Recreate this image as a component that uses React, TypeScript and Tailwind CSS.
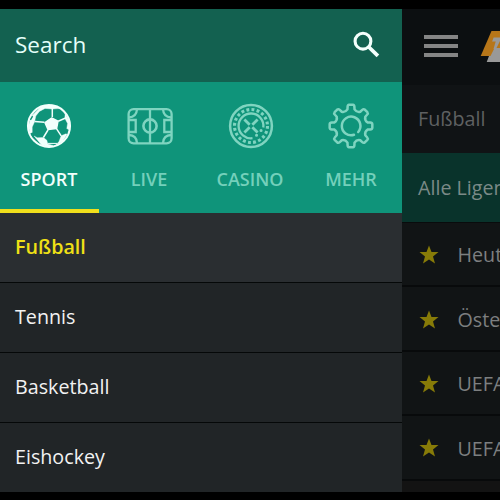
import React from "react";

function polar(r: number, deg: number) {
  const a = (deg * Math.PI) / 180;
  return `${(24 + r * Math.cos(a)).toFixed(2)} ${(24 + r * Math.sin(a)).toFixed(2)}`;
}

const gearPath =
  Array.from({ length: 8 }, (_, i) => {
    const c = i * 45;
    return `${i === 0 ? "M" : "L"}${polar(17, c - 12)} L${polar(19.6, c - 10)} Q${polar(21.4, c - 9)} ${polar(21.4, c - 5)} L${polar(21.4, c + 5)} Q${polar(21.4, c + 9)} ${polar(19.6, c + 10)} L${polar(17, c + 12)} Q${polar(14.6, c + 22.5)} ${polar(17, c + 33)}`;
  }).join(" ") + "Z";

function Ball() {
  return (
    <svg viewBox="0 0 48 48" className="-ml-0.5 size-12" fill="none" stroke="#f2fffc" strokeWidth="1.5">
      <circle cx="24" cy="24" r="21" strokeWidth="2.1" />
      <path d="M26.6 16 33 19.2 31.6 26.4 23 27.4 20 20.6Z" fill="#f2fffc" strokeLinejoin="round" />
      <path d="M27.3 15V6.8M33.2 19.2l6.8-2.9M31.6 26.8l4.6 7M23 28l-4.6 7.5M19.4 20.3l-9.8-.7" />
      <path d="M16 4.6 27 2.8 37 7 33.5 6.6 27.3 7 20 6.4 14.4 9.4 10.8 14 9.6 19.8 7.2 25 7.2 30.5 4.8 31.5 3.6 24 5.8 15ZM39.8 16.3 40.2 11.8 44.6 20 44.6 28 41.8 26.6 42.6 21.5ZM9 34 12.4 35.8 18.4 35.5 21.8 38.2 22.8 42 28 43.4 24 44.6 17 43.4ZM36.2 33.8 41 31.8 42 32.4 37.5 39.5 30.5 43.4 34 39.5Z" fill="#f2fffc" strokeWidth=".4" />
      <path d="M22.6 41.4h9.4" strokeWidth="1" />
      <path d="M5.4 17.8 7.6 14.2M6.2 31.4q1.5 3.4 3.4 5" stroke="#0f947a" strokeWidth="1.4" />
    </svg>
  );
}

function Pitch() {
  return (
    <svg viewBox="0 0 48 48" className="size-12" fill="none" stroke="#7fd4c0" strokeWidth="2.3">
      <rect x="2.6" y="7.1" width="43" height="34.2" rx="5" />
      <circle cx="24" cy="24" r="6.6" strokeWidth="2.6" />
      <path d="M24 7v34.4M3 18h6.7v12H3M45 18h-6.7v12H45M3 15.3Q10.5 15 11 7.2M45 15.3Q37.5 15 37 7.2M3 33q7.5.3 8 8M45 33q-7.5.3-8 8" />
    </svg>
  );
}

function Chip() {
  return (
    <svg viewBox="0 0 48 48" className="size-12" fill="none" stroke="#7fd4c0" strokeWidth="2.5">
      <circle cx="24" cy="24" r="20.9" />
      <circle cx="24" cy="24" r="16.5" strokeWidth="3.1" strokeDasharray="2.9 2.284" />
      <path d="M25.5 36.2A12.4 12.4 0 1 1 36.3 25.5" strokeWidth="2.3" />
      <path d="m17.4 17.4 5.3 5.3m2.6 2.6 5.3 5.3m0-13.2-5.3 5.3m-2.6 2.6-5.3 5.3" strokeWidth="2.8" />
      <path d="M34 28.6h.1M29.5 33.2h.1" strokeWidth="3" strokeLinecap="round" />
    </svg>
  );
}

function Gear() {
  return (
    <svg viewBox="0 0 48 48" className="-ml-0.5 size-12" fill="none" stroke="#7fd4c0" strokeWidth="2.5">
      <path d={gearPath} strokeLinejoin="round" />
      <path d="M31.2 30A9.3 9.3 0 1 0 27 32.8" strokeLinecap="round" />
    </svg>
  );
}

const tabs = [
  { label: "SPORT", icon: Ball },
  { label: "LIVE", icon: Pitch },
  { label: "CASINO", icon: Chip },
  { label: "MEHR", icon: Gear },
];

const sports = ["Fußball", "Tennis", "Basketball", "Eishockey"];
const leagues = ["Heute", "Österreich", "UEFA Champions", "UEFA Europa"];

export default function App() {
  return (
    <div className="flex h-[500px] w-[500px] flex-col overflow-hidden bg-black pt-[9px] font-['Open_Sans','Noto_Sans',sans-serif]">
      <div className="flex h-[483px] shrink-0 overflow-hidden">
        <aside className="flex w-[402px] shrink-0 flex-col bg-[#212527]">
          <div className="flex h-[73px] shrink-0 items-center justify-between bg-[#136150] pr-[22px] pl-[15px]">
            <span className="mt-[-2px] text-[22.5px] leading-8 text-[#e4fff9]">Search</span>
            <svg viewBox="0 0 26 26" className="mt-[-3px] size-[27px]" fill="none" stroke="#f4fffc">
              <circle cx="9.6" cy="9.8" r="7.6" strokeWidth="3" />
              <path d="m15.2 15.4 8.8 8.6" strokeWidth="3.6" />
            </svg>
          </div>
          <nav className="flex h-[131px] shrink-0 bg-[#0f947a]">
            {tabs.map(({ label, icon: Icon }, i) => (
              <div
                key={label}
                className={`flex flex-col items-center border-b-4 pt-5 ${
                  i === 0
                    ? "w-[99px] border-[#f0df1c] text-[#f2fffc]"
                    : "w-[101px] border-transparent text-[#74d0bb]"
                }`}
              >
                <Icon />
                <span className="mt-[17px] -ml-px text-[18px] leading-6 font-semibold">{label}</span>
              </div>
            ))}
          </nav>
          {sports.map((name, i) => (
            <div
              key={name}
              className={`flex h-[70px] shrink-0 items-center border-b border-[#050808] pb-0.5 pl-[15px] text-[19.7px] ${
                i === 0 ? "bg-[#2a2e31] font-semibold text-[#f0e016]" : "text-[#f2f2f2]"
              }`}
            >
              {name}
            </div>
          ))}
        </aside>
        <main className="flex w-[98px] shrink-0 flex-col overflow-hidden bg-[#111415] text-[19.7px] whitespace-nowrap">
          <div className="flex h-[76px] shrink-0 items-center bg-[#0c0f11] pl-[22px]">
            <div className="mt-[-2px] flex w-[34px] shrink-0 flex-col gap-[5px]">
              <span className="h-1 bg-[#858585]" />
              <span className="h-1 bg-[#858585]" />
              <span className="h-1 bg-[#858585]" />
            </div>
            <svg viewBox="0 0 20 32" className="mt-[-2px] ml-[22px] h-8 w-5 shrink-0">
              <path d="M11.5 1H20V26H.7Z" fill="#b77619" />
              <path d="M10.5 26 14.5 18H20V32H6.7L9 26Z" fill="#999" />
              <path d="M13.6 7.5H20V11L16 19h-2.5l2.2-7.6h-3.6Z" fill="#999" />
            </svg>
          </div>
          <div className="flex h-[68px] shrink-0 items-center bg-[#101315] pl-4 text-[#5f6162]">Fußball</div>
          <div className="flex h-[70px] shrink-0 items-center border-b border-[#090b0c] bg-[#09332b] pl-4 text-[#7b8a87]">
            Alle Ligen
          </div>
          {leagues.map((name) => (
            <div
              key={name}
              className="flex h-[64.4px] shrink-0 items-center border-b-2 border-[#080a0b] pt-0.5 pl-[17px] text-[#7d7f80]"
            >
              <svg viewBox="0 0 20 20" className="mr-[18.5px] size-5 shrink-0" fill="#877b08">
                <path d="m10 .4 2.5 6.5 7 .2-5.5 4.4 2 6.9-6-4-6 4 2-6.9L.5 7.1l7-.2Z" />
              </svg>
              {name}
            </div>
          ))}
          <div className="flex-1 bg-[#131313]" />
        </main>
      </div>
    </div>
  );
}
